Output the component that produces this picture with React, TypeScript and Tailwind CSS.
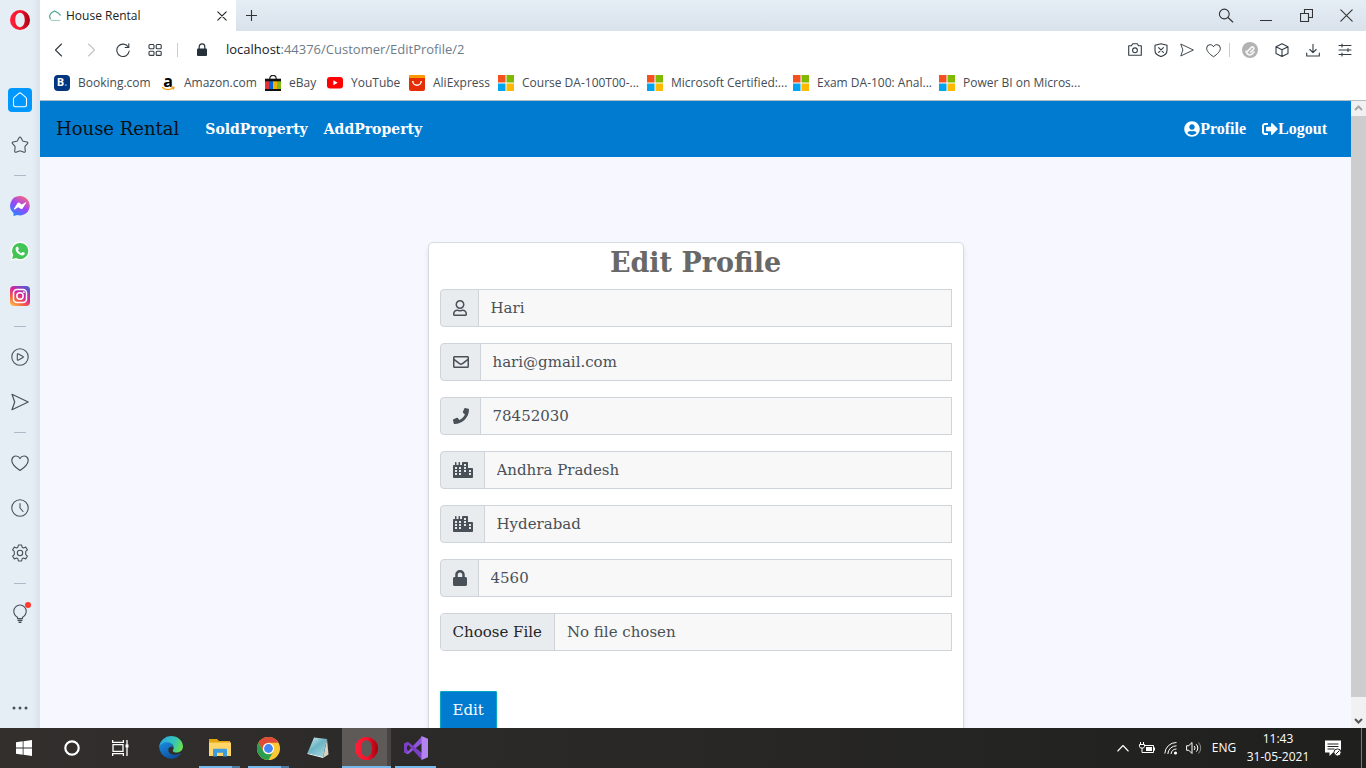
import React from "react";
import {
  FaUserCircle,
  FaSignOutAlt,
  FaRegUser,
  FaRegEnvelope,
  FaPhone,
  FaCity,
  FaLock,
} from "react-icons/fa";

type Kids = { children: React.ReactNode };
type LineProps = Kids & { size?: number; className?: string };

const Line = ({ children, size = 18, className = "" }: LineProps) => (
  <svg
    width={size}
    height={size}
    viewBox={`0 0 ${size} ${size}`}
    fill="none"
    stroke="currentColor"
    strokeWidth="1.1"
    strokeLinejoin="round"
    strokeLinecap="round"
    className={className}
    aria-hidden="true"
  >
    {children}
  </svg>
);

const OperaMark = ({ size, id }: { size: number; id: string }) => (
  <svg width={size} height={size} viewBox="0 0 24 24" aria-hidden="true">
    <defs>
      <linearGradient id={id} x1="0" x2="1">
        <stop offset="0" stopColor="#ff2038" />
        <stop offset="0.55" stopColor="#f0142c" />
        <stop offset="1" stopColor="#a3000e" />
      </linearGradient>
    </defs>
    <path
      fillRule="evenodd"
      fill={`url(#${id})`}
      d="M12 0a12 12 0 1 0 0 24a12 12 0 1 0 0-24zM12 3.400c3.400 0 5.700 3.700 5.700 8.600s-2.300 8.600-5.700 8.600s-5.700-3.700-5.700-8.600s2.300-8.600 5.700-8.600z"
    />
  </svg>
);

const MicrosoftMark = () => (
  <svg width="16" height="16" viewBox="0 0 16 16" aria-hidden="true">
    <path fill="#f4511e" d="M0 0h7.500v7.500H0z" />
    <path fill="#7fba00" d="M8.500 0H16v7.500H8.500z" />
    <path fill="#00a4ef" d="M0 8.500h7.500V16H0z" />
    <path fill="#ffb900" d="M8.500 8.500H16V16H8.500z" />
  </svg>
);

const Messenger = () => (
  <svg width="20" height="20" viewBox="0 0 20 20" aria-hidden="true">
    <defs>
      <linearGradient id="msg" x1="0.2" y1="1" x2="0.8" y2="0">
        <stop offset="0" stopColor="#1f8bff" />
        <stop offset="0.5" stopColor="#9a45fa" />
        <stop offset="1" stopColor="#ff6970" />
      </linearGradient>
    </defs>
    <path fill="url(#msg)" d="M10 0a10 9.700 0 1 1-2.700 19.100L3.500 20v-3A9.700 9.700 0 0 1 10 0z" />
    <path fill="#fff" d="M3.900 12.700L7.400 7.200c.5-.7 1.300-.8 2-.4l2.300 1.700 3.700-2.100c.6-.3 1 .2.700.7l-3.500 5.400c-.5.700-1.300.8-2 .3L8.300 11.200l-3.700 2.200c-.5.300-1-.2-.7-.7z" />
  </svg>
);

const Instagram = () => (
  <svg width="20" height="20" viewBox="0 0 20 20" aria-hidden="true">
    <defs>
      <linearGradient id="ig" x1="0.1" y1="1" x2="0.8" y2="0">
        <stop offset="0" stopColor="#fdc04c" />
        <stop offset="0.3" stopColor="#f56040" />
        <stop offset="0.6" stopColor="#d6249f" />
        <stop offset="1" stopColor="#4f5bd5" />
      </linearGradient>
    </defs>
    <rect width="20" height="20" rx="4" fill="url(#ig)" />
    <g fill="none" stroke="#fff" strokeWidth="1.5">
      <rect x="3.500" y="3.500" width="13" height="13" rx="3.500" />
      <circle cx="10" cy="10" r="3.200" />
    </g>
    <circle cx="13.900" cy="6.200" r="0.900" fill="#fff" />
  </svg>
);

const WhatsApp = () => (
  <svg width="20" height="20" viewBox="0 0 20 20" aria-hidden="true">
    <path fill="#fff" d="M10 .5a9.500 9.500 0 1 1-4.300 18L.5 19.700l1.300-5A9.500 9.500 0 0 1 10 .5z" />
    <path fill="#42c554" d="M10.100 1.900a8.100 8.100 0 1 1-4 15.100l-4 1 1.100-3.900A8.100 8.100 0 0 1 10.100 1.900z" />
    <path fill="#fff" d="M7.300 5.700c.4-.1.700 0 .8.400l.7 1.600c.1.300 0 .5-.2.800l-.6.700c.8 1.500 1.900 2.400 3.300 3l.8-1c.2-.3.500-.3.800-.2l1.600.8c.3.200.4.400.3.800-.2 1.200-1.300 1.900-2.600 1.800-3.700-.5-6.700-3.600-6.600-6.300 0-1.200.7-2.200 1.700-2.400z" />
  </svg>
);

const Heart = ({ size = 18 }: { size?: number }) => (
  <svg width={size} height={size} viewBox="0 0 18 18" fill="none" stroke="currentColor" strokeWidth="1.2" strokeLinejoin="round" aria-hidden="true">
    <path d="M9 16.500C4.500 13.500.8 10 .8 6.200A4.200 4.200 0 0 1 5 2c1.800 0 3.200 1 4 2.500C9.800 3 11.200 2 13 2a4.200 4.200 0 0 1 4.200 4.200c0 3.800-3.700 7.300-8.200 10.300z" />
  </svg>
);

const Send = ({ size = 18 }: { size?: number }) => (
  <svg width={size} height={size} viewBox="0 0 18 18" fill="none" stroke="currentColor" strokeWidth="1.2" strokeLinejoin="round" aria-hidden="true">
    <path d="M1 1.300L17.200 9 1 16.700 3.700 9z" />
  </svg>
);

const Cell = ({ label, children, className = "" }: Kids & { label: string; className?: string }) => (
  <button type="button" aria-label={label} className={`flex shrink-0 items-center justify-center ${className}`}>
    {children}
  </button>
);

const SideSep = () => (
  <div className="flex h-4 shrink-0 items-center justify-center">
    <span className="h-px w-3 bg-[#abb9c8]" />
  </div>
);

const Sidebar = () => (
  <nav
    aria-label="Browser sidebar"
    className="flex w-10 shrink-0 flex-col overflow-hidden bg-gradient-to-r from-[#e5edf5] from-80% to-[#dae4ec] text-[#48525c]"
  >
    <Cell label="Opera menu" className="mb-[37px] h-10">
      <OperaMark size={20} id="opera-side" />
    </Cell>
    <Cell label="Home" className="h-[45px]">
      <span className="flex size-6 items-center justify-center rounded-sm bg-[#0098ff] text-white">
        <Line size={16}>
          <path d="M1.500 6.800c0-.6.200-1 .7-1.400L7.200 1.200c.5-.4 1.100-.4 1.600 0l5 4.200c.5.400.7.800.7 1.400v6.200c0 1-.7 1.700-1.700 1.700H3.200c-1 0-1.700-.7-1.700-1.700z" />
        </Line>
      </span>
    </Cell>
    <Cell label="Bookmarks" className="h-[45px]">
      <Line>
        <path d="M8.200 1.600c.4-.7 1.200-.7 1.600 0l1.700 3c.2.300.5.500.8.600l3.700.8c.8.200 1.100 1 .5 1.600l-2.300 2.600c-.2.200-.3.600-.3 1l.4 4c0 .8-.6 1.300-1.300 1l-3.400-1.300c-.4-.2-.8-.2-1.200 0L5 16.200c-.7.300-1.400-.2-1.300-1l.4-4c0-.4-.1-.8-.3-1L1.500 7.600C.9 7 1.200 6.200 2 6l3.700-.8c.3-.1.600-.3.800-.6z" />
      </Line>
    </Cell>
    <SideSep />
    <Cell label="Messenger" className="h-[45px]"><Messenger /></Cell>
    <Cell label="WhatsApp" className="h-[45px]"><WhatsApp /></Cell>
    <Cell label="Instagram" className="h-[45px]"><Instagram /></Cell>
    <SideSep />
    <Cell label="Player" className="h-[45px]">
      <Line>
        <circle cx="9" cy="9" r="8.200" />
        <path d="M6.300 6.300v5.400c0 .4.300.6.700.5l5-2.600c.5-.3.500-.8 0-1.100L7 5.800c-.4-.1-.7.100-.7.500z" />
      </Line>
    </Cell>
    <Cell label="My Flow" className="h-[45px]"><Send /></Cell>
    <SideSep />
    <Cell label="Pinboards" className="h-[45px]"><Heart /></Cell>
    <Cell label="History" className="h-[45px]">
      <Line>
        <circle cx="9" cy="9" r="8.200" />
        <path d="M9 4.500V9l3 3.500" />
      </Line>
    </Cell>
    <Cell label="Settings" className="h-[45px]">
      <Line>
        <path d="M7.400 1h3.200l.5 2.200 1.400.8 2.200-.9 1.700 2.700-1.700 1.600v3.200l1.700 1.600-1.700 2.700-2.200-.9-1.400.8-.5 2.200H7.400l-.5-2.200-1.400-.8-2.200.9-1.700-2.700 1.700-1.600V7.400L1.600 5.800l1.700-2.700 2.200.9 1.400-.8z" />
        <circle cx="9" cy="9" r="2.700" />
      </Line>
    </Cell>
    <SideSep />
    <Cell label="Tips" className="h-[45px]">
      <span className="relative">
        <svg width="14" height="20" viewBox="0 0 14 20" fill="none" stroke="currentColor" strokeWidth="1.100" aria-hidden="true">
          <path d="M4.500 14.500v-1.300C2.500 12 .8 10 .8 7.200a6.200 6.200 0 0 1 12.400 0c0 2.800-1.700 4.800-3.700 6v1.300z" />
          <path d="M4.500 16.300h5M5.500 18.300h3" strokeWidth="1.600" />
        </svg>
        <span className="absolute -right-1 -top-0.5 size-1.5 rounded-full bg-[#ff3b30]" />
      </span>
    </Cell>
    <Cell label="Sidebar setup" className="mt-auto h-10">
      <svg width="16" height="4" viewBox="0 0 16 4" fill="currentColor" aria-hidden="true">
        <circle cx="2" cy="2" r="1.500" />
        <circle cx="8" cy="2" r="1.500" />
        <circle cx="14" cy="2" r="1.500" />
      </svg>
    </Cell>
  </nav>
);

const TitleBar = () => (
  <div className="flex h-[31px] shrink-0 bg-gradient-to-b from-[#e5edf5] to-[#d9e2eb] text-[#333]">
    <div className="flex w-[196px] items-center bg-white pl-2 text-xs text-[#222]">
      <svg width="14" height="12" viewBox="0 0 14 12" fill="none" aria-hidden="true">
        <path d="M2.500 9.500L1.500 6l1.700-3L6.500 1l4 2.200 2 2.300" stroke="#55a896" strokeWidth="1.200" />
        <path d="M3 10.500h9" stroke="#a9cfc8" strokeWidth="1.200" />
      </svg>
      <span className="ml-1 grow">House Rental</span>
      <Cell label="Close tab" className="h-full w-7">
        <Line size={10}><path d="M.8.8l8.400 8.400M9.200.8L.8 9.200" /></Line>
      </Cell>
    </div>
    <Cell label="New tab" className="w-[30px]">
      <Line size={11}><path d="M5.500 0v11M0 5.500h11" /></Line>
    </Cell>
    <div className="ml-auto flex">
      <Cell label="Search tabs" className="w-10">
        <Line size={16}><circle cx="6.300" cy="6" r="4.900" /><path d="M10 9.500l4.800 4.500" /></Line>
      </Cell>
      <Cell label="Minimise" className="w-10">
        <Line size={12}><path d="M0 10.500h12" /></Line>
      </Cell>
      <Cell label="Restore" className="w-10">
        <Line size={13}><path d="M.5 4.500h8v8h-8zM4.500 4.300V.5h8v8H8.700" strokeLinejoin="miter" /></Line>
      </Cell>
      <Cell label="Close window" className="w-10">
        <Line size={13}><path d="M.8.8l11.400 11.400M12.200.8L.8 12.200" /></Line>
      </Cell>
    </div>
  </div>
);

const AddressBar = () => (
  <div className="flex h-[38px] shrink-0 items-center bg-white pl-[3px] pr-[5px] text-[#333c44]">
    <Cell label="Back" className="h-8 w-8">
      <Line size={14}><path d="M9.500 1L3.500 7l6 6" /></Line>
    </Cell>
    <Cell label="Forward" className="h-8 w-8 text-[#c0c4c8]">
      <Line size={14}><path d="M4.500 1l6 6-6 6" /></Line>
    </Cell>
    <Cell label="Reload" className="h-8 w-8">
      <Line size={14}><path d="M12.300 4A6.200 6.200 0 1 0 13.200 8" /><path d="M12.800.8v3.700H9.200" /></Line>
    </Cell>
    <Cell label="Speed dials" className="h-8 w-8">
      <Line size={14}>
        <rect x="1" y="1.500" width="5" height="4.200" rx="1" />
        <rect x="8.200" y="1.500" width="5" height="4.200" rx="1" />
        <rect x="1" y="8.200" width="5" height="4.200" rx="1" />
        <rect x="8.200" y="8.200" width="5" height="4.200" rx="1" />
      </Line>
    </Cell>
    <span className="ml-1.5 h-3.5 w-px bg-[#c9cdd1]" />
    <Cell label="Site information" className="h-8 w-12">
      <svg width="12" height="14" viewBox="0 0 12 14" aria-hidden="true">
        <rect x="1" y="5.500" width="10" height="7.500" rx="1" fill="#27313a" />
        <path d="M3.200 6V3.700a2.800 2.800 0 0 1 5.600 0V6" fill="none" stroke="#27313a" strokeWidth="1.200" />
      </svg>
    </Cell>
    <a href="#address" className="grow text-[13px] text-[#6e7c89]">
      <span className="text-[#15191d]">localhost</span>:44376/Customer/EditProfile/2
    </a>
    <Cell label="Snapshot" className="h-8 w-[26px]">
      <Line size={16}>
        <path d="M1.700 3.800h2.800l1.200-2h4.600l1.200 2h2.800v9.500H1.700z" />
        <circle cx="8" cy="8.300" r="2.400" />
      </Line>
    </Cell>
    <Cell label="Ad blocker" className="h-8 w-[26px]">
      <Line size={14}>
        <path d="M7 .7l6 1.600v5.300c0 3-3 5.200-6 6-3-.8-6-3-6-6V2.300z" />
        <path d="M4.600 4.600l4.800 4.800M9.400 4.600L4.600 9.400" />
      </Line>
    </Cell>
    <Cell label="Send to My Flow" className="h-8 w-[26px]"><Send size={14} /></Cell>
    <Cell label="Add to bookmarks" className="h-8 w-[26px]"><Heart size={15} /></Cell>
    <span className="ml-[3px] mr-1 h-3.5 w-px bg-[#c9cdd1]" />
    <Cell label="Extension" className="h-8 w-8">
      <svg width="16" height="16" viewBox="0 0 16 16" aria-hidden="true">
        <circle cx="8" cy="8" r="8" fill="#b2b2b2" />
        <path d="M5 9.800l4.500-4.600a1.500 1.500 0 0 1 2.100 2.100L8.200 10.700M4 8.500a4 4 0 0 0 5.500 4l3-3" fill="none" stroke="#f6f6f6" strokeWidth="1.700" />
      </svg>
    </Cell>
    <Cell label="Extensions" className="h-8 w-[31px]">
      <Line size={14}><path d="M7 .7l6 3v6.800l-6 3-6-3V3.700zM1 3.700l6 3 6-3M7 6.700v6.800" /></Line>
    </Cell>
    <Cell label="Downloads" className="h-8 w-8">
      <Line size={14}><path d="M7 1.200v8.300M3.800 6.500L7 9.700l3.200-3.200M.7 10v3h12.600v-3" /></Line>
    </Cell>
    <Cell label="Easy setup" className="h-8 w-8">
      <Line size={14}><path d="M1 2.500h12M1 7h12M1 11.500h12M4 1v3M10 5.500v3M4 10v3" /></Line>
    </Cell>
  </div>
);

const bookmarks: { label: string; icon: React.ReactNode }[] = [
  {
    label: "Booking.com",
    icon: (
      <span className="flex size-4 items-center justify-center rounded-sm bg-[#003580] text-[11px] font-bold text-white">
        B<span className="text-[#3fb2f5]">.</span>
      </span>
    ),
  },
  {
    label: "Amazon.com",
    icon: (
      <span className="relative flex size-4 items-center justify-center pb-1 text-base font-bold leading-none text-black">
        a
        <svg width="14" height="5" viewBox="0 0 14 5" className="absolute bottom-0 left-px" aria-hidden="true">
          <path d="M1 1.200c3.500 2.800 8 2.800 11.300.8M10 .9l3 .4-.6 2.300" fill="none" stroke="#f7a11a" strokeWidth="1.300" />
        </svg>
      </span>
    ),
  },
  {
    label: "eBay",
    icon: (
      <svg width="16" height="16" viewBox="0 0 16 16" aria-hidden="true">
        <path d="M4.800 5V3.500a3.200 3.200 0 0 1 6.400 0V5" fill="none" stroke="#222" strokeWidth="1.200" />
        <path d="M0 3.700h16V16H0z" fill="#111" />
        <path d="M0 6.300h4V14H0z" fill="#e53238" />
        <path d="M4 6.300h4V14H4z" fill="#0064d2" />
        <path d="M8 6.300h4V14H8z" fill="#f5af02" />
        <path d="M12 6.300h4V14h-4z" fill="#86b817" />
      </svg>
    ),
  },
  {
    label: "YouTube",
    icon: (
      <svg width="16" height="12" viewBox="0 0 16 12" aria-hidden="true">
        <rect width="16" height="11.500" rx="3" fill="#f00" />
        <path d="M6.400 3.200l4.300 2.500-4.300 2.500z" fill="#fff" />
      </svg>
    ),
  },
  {
    label: "AliExpress",
    icon: (
      <svg width="16" height="16" viewBox="0 0 16 16" aria-hidden="true">
        <rect width="16" height="16" rx="2" fill="#e62e04" />
        <path d="M2 0h12a2 2 0 0 1 2 2v1H0V2a2 2 0 0 1 2-2z" fill="#ff9900" />
        <path d="M3.800 6a4.200 4.200 0 0 0 8.400 0" fill="none" stroke="#fff" strokeWidth="1.400" />
      </svg>
    ),
  },
  { label: "Course DA-100T00-...", icon: <MicrosoftMark /> },
  { label: "Microsoft Certified:...", icon: <MicrosoftMark /> },
  { label: "Exam DA-100: Anal...", icon: <MicrosoftMark /> },
  { label: "Power BI on Micros...", icon: <MicrosoftMark /> },
];

const BookmarkBar = () => (
  <div className="grid h-8 shrink-0 grid-cols-[106px_105px_62px_82px_89px_149px_146px_146px_auto] border-b border-[#b4bcc4] bg-white pb-1 pl-3.5 text-xs text-[#444c54]">
    {bookmarks.map((b) => (
      <a key={b.label} href="#bookmark" className="flex items-center gap-2 whitespace-nowrap">
        {b.icon}
        <span>{b.label}</span>
      </a>
    ))}
  </div>
);

const fields = [
  { id: "name", label: "Name", type: "text", value: "Hari", Icon: FaRegUser, box: "w-3.5" },
  { id: "email", label: "Email", type: "email", value: "hari@gmail.com", Icon: FaRegEnvelope, box: "w-4" },
  { id: "phone", label: "Phone", type: "tel", value: "78452030", Icon: FaPhone, box: "w-4" },
  { id: "state", label: "State", type: "text", value: "Andhra Pradesh", Icon: FaCity, box: "w-5" },
  { id: "city", label: "City", type: "text", value: "Hyderabad", Icon: FaCity, box: "w-5" },
  { id: "pin", label: "Password", type: "text", value: "4560", Icon: FaLock, box: "w-3.5" },
];

const PageContent = () => (
  <div className="flex min-h-0 grow">
    <main className="grow overflow-hidden bg-[#f7f7ff] font-['DejaVu_Serif',serif]">
      <header className="flex h-14 items-center bg-[#007bd0] px-4">
        <a href="#home" className="text-lg text-[#0a1016]">House Rental</a>
        <nav aria-label="Main" className="flex grow items-center gap-4 pl-[26px] text-sm font-bold text-white">
          <a href="#sold">SoldProperty</a>
          <a href="#add">AddProperty</a>
        </nav>
        <nav aria-label="Account" className="flex items-center gap-4 pr-2 font-['Liberation_Serif',serif] text-base font-bold text-white">
          <a href="#profile" className="flex items-center"><FaUserCircle className="size-4" />Profile</a>
          <a href="#logout" className="flex items-center"><FaSignOutAlt className="size-4" />Logout</a>
        </nav>
      </header>
      <form
        onSubmit={(e) => e.preventDefault()}
        className="mx-auto mt-[85px] w-full max-w-[536px] rounded-[5px] border border-[#d8dae0] bg-white px-[11px] pb-6 shadow-md"
      >
        <h1 className="mb-1.5 text-center text-[27px] font-bold leading-10 text-[#686868]">Edit Profile</h1>
        <div className="flex flex-col gap-4">
          {fields.map(({ id, label, type, value, Icon, box }) => (
            <div key={id} className="flex h-[38px]">
              <label
                htmlFor={id}
                aria-label={label}
                className="flex items-center rounded-l border border-[#ced4da] bg-[#e9ecef] px-3 text-[#495057]"
              >
                <Icon className={`-mr-px h-4 ${box}`} />
              </label>
              <input
                id={id}
                type={type}
                defaultValue={value}
                className="-ml-px min-w-0 grow border border-[#ced4da] bg-[#f8f8f8] px-3 text-[15px] text-[#495057]"
              />
            </div>
          ))}
          <input
            type="file"
            aria-label="Profile picture"
            className="h-[38px] w-full rounded-l border border-[#ced4da] bg-[#f8f8f8] text-[15px] leading-9 text-[#495057] file:mr-3 file:h-9 file:border-r file:border-[#ced4da] file:bg-[#e9ecef] file:px-3 file:text-[#212529]"
          />
        </div>
        <button
          type="submit"
          className="mt-10 h-[38px] rounded-[1px] border border-[#0aa5c0] bg-[#007bd0] px-3 text-[15px] font-medium text-white shadow"
        >
          Edit
        </button>
      </form>
    </main>
    <div className="flex w-[15px] shrink-0 flex-col bg-[#f1f1f1]" aria-hidden="true">
      <svg width="15" height="15" viewBox="0 0 15 15"><path d="M4 9l3.500-3.500L11 9" fill="none" stroke="#a8a8a8" strokeWidth="2" /></svg>
      <div className="grow bg-[#cdcdcd]" />
      <svg width="15" height="31" viewBox="0 0 15 31"><path d="M4 22l3.500 3.500L11 22" fill="none" stroke="#555" strokeWidth="2" /></svg>
    </div>
  </div>
);

const Edge = () => (
  <svg width="24" height="24" viewBox="0 0 24 24" aria-hidden="true">
    <defs>
      <linearGradient id="edge-top" x1="0" y1="0.3" x2="1" y2="0.6">
        <stop offset="0" stopColor="#2aa8e8" />
        <stop offset="0.6" stopColor="#35c6b4" />
        <stop offset="1" stopColor="#6be04b" />
      </linearGradient>
      <linearGradient id="edge-low" x1="0" y1="0" x2="0.7" y2="1">
        <stop offset="0" stopColor="#1b8fe0" />
        <stop offset="1" stopColor="#0c4c9c" />
      </linearGradient>
    </defs>
    <path fill="url(#edge-low)" d="M.2 10.500C1.500 6.500 6 5 9.500 6c3 .8 4.500 3 4.500 5.500-1.500-1.800-4.500-.5-4.700 2.300-.2 3.500 4.500 6.200 9 4.600 1.500-.5 2.700-1.300 3.200-1.200.4.100.4.500.2.900A12 12 0 0 1 .2 10.500z" />
    <path fill="url(#edge-top)" d="M.2 11A12 12 0 0 1 12 0c7 0 12 5 12 10.500 0 3.800-3 6-6.300 6-2.500 0-4-1-4-1.800 0-.6.900-1 .9-2.900 0-3.200-3-5.500-6.700-5.500C4.500 6.300 1.300 8 .2 11z" />
  </svg>
);

const Explorer = () => (
  <svg width="24" height="20" viewBox="0 0 24 20" aria-hidden="true">
    <path fill="#e5a50f" d="M1 1h8l2 2h11v5H1z" />
    <path fill="#ffd667" d="M1 4.500h22V18H1z" />
    <path fill="#3d9be0" d="M5 18.500v-6.500c0-.8.500-1.300 1.300-1.300h11.400c.8 0 1.300.5 1.300 1.300v6.500h-4v-3.700H9v3.700z" />
  </svg>
);

const Chrome = () => (
  <svg width="23" height="23" viewBox="0 0 24 24" aria-hidden="true">
    <circle cx="12" cy="12" r="12" fill="#fcc934" />
    <path fill="#e04a3b" d="M1.600 6A12 12 0 0 1 22.400 6H12a6 6 0 0 0-5.200 9z" />
    <path fill="#2a9d50" d="M1.600 6A12 12 0 0 0 12 24l5.200-9A6 6 0 0 1 6.800 15z" />
    <circle cx="12" cy="12" r="5.800" fill="#fff" />
    <circle cx="12" cy="12" r="4.600" fill="#4285f4" />
  </svg>
);

const Notepad = () => (
  <svg width="24" height="24" viewBox="0 0 24 24" aria-hidden="true">
    <defs>
      <linearGradient id="pad" x1="0" y1="0" x2="0.7" y2="1">
        <stop offset="0" stopColor="#d8f0f4" />
        <stop offset="0.5" stopColor="#6cb4c4" />
        <stop offset="1" stopColor="#9fd5df" />
      </linearGradient>
    </defs>
    <path fill="#d8d2c0" d="M21 3l1.500 15.500L17 22z" />
    <path fill="url(#pad)" d="M8 1.500L21 3l-4 18.500L1.500 17z" />
    <path stroke="#eef8fa" fill="none" d="M1.500 17.500l15.500 4" />
  </svg>
);

const VisualStudio = () => (
  <svg width="24" height="24" viewBox="0 0 24 24" aria-hidden="true">
    <path fill="#7b3fc4" d="M0 7.500L2 6.500 4 7.300v9.400L2 17.500l-2-1z" />
    <path fill="#8f55dc" d="M2 17.500L18 .2V7L4 18.200z" />
    <path fill="#7b3fc4" d="M2 6.500L4 5.800 18 17v7z" />
    <path fill="#2a2827" d="M3 9.500v5L5.500 12z" />
    <path fill="#b184f0" d="M17.500 0L24 2.700v18.600L17.500 24z" />
  </svg>
);

const Running = ({ stacked = false }: { stacked?: boolean }) => (
  <span className="absolute inset-x-1 bottom-0 flex h-0.5">
    <span className="grow bg-[#76b9ed]" />
    {stacked && <span className="w-2 bg-[#4d7ba0]" />}
  </span>
);

const Taskbar = () => (
  <footer className="flex h-10 shrink-0 bg-gradient-to-r from-[#322f2d] to-[#1f201e] text-xs text-white">
    <Cell label="Start" className="w-12">
      <svg width="16" height="16" viewBox="0 0 16 16" fill="#fff" aria-hidden="true">
        <path d="M0 2.200l6.700-.9v6.300H0zM7.500 1.200L16 0v7.600H7.500zM0 8.400h6.700v6.300L0 13.800zM7.500 8.400H16V16l-8.500-1.200z" />
      </svg>
    </Cell>
    <Cell label="Cortana" className="w-12">
      <svg width="16" height="16" viewBox="0 0 16 16" fill="none" aria-hidden="true">
        <circle cx="8" cy="8" r="6.700" stroke="#fff" strokeWidth="2.200" />
      </svg>
    </Cell>
    <Cell label="Task view" className="mr-0.5 w-12">
      <svg width="17" height="16" viewBox="0 0 17 16" fill="none" stroke="#fff" strokeWidth="1.300" aria-hidden="true">
        <path d="M1 4.700h10v6.600H1zM.6 0v2.300h10.800V0M.6 16v-2.300h10.800V16M15 0v16" />
        <path d="M13.500 4.500h3v3h-3z" fill="#fff" stroke="none" />
      </svg>
    </Cell>
    <Cell label="Microsoft Edge" className="w-[49px]"><Edge /></Cell>
    <Cell label="File Explorer" className="relative w-[49px]"><Explorer /><Running stacked /></Cell>
    <Cell label="Google Chrome" className="relative w-[49px]"><Chrome /><Running stacked /></Cell>
    <Cell label="Notepad" className="w-[49px]"><Notepad /></Cell>
    <Cell label="Opera" className="relative w-[49px] bg-[#5d5a58]">
      <OperaMark size={23} id="opera-task" />
      <span className="absolute inset-y-0 right-0 w-1 bg-[#474543]" />
      <span className="absolute inset-x-0 bottom-0 h-0.5 bg-[#76b9ed]" />
    </Cell>
    <Cell label="Visual Studio" className="relative w-[49px]"><VisualStudio /><Running /></Cell>
    <div className="ml-auto flex">
      <Cell label="Hidden icons" className="w-6">
        <Line size={12}><path d="M.8 9L6 3.500 11.200 9" /></Line>
      </Cell>
      <Cell label="Battery" className="w-6">
        <svg width="16" height="13" viewBox="0 0 16 13" fill="none" stroke="#fff" aria-hidden="true">
          <path d="M5.500 3.500h9v7h-9M15.500 5.500v3" />
          <path d="M7 5h6v4H7z" fill="#fff" stroke="none" />
          <path d="M1.500 0v2.500M4.500 0v2.500M.5 2.500h5v2l-1 1.500h-3l-1-1.500zM3 6v4.500h3" />
        </svg>
      </Cell>
      <Cell label="Network" className="w-6">
        <svg width="14" height="14" viewBox="0 0 14 14" fill="none" stroke="#fff" aria-hidden="true">
          <path d="M.8 12.500A11.500 11.500 0 0 1 12.500 1.500M3.800 13A8.700 8.700 0 0 1 12.500 4.800M7 13a5.700 5.700 0 0 1 5.500-5" />
          <circle cx="11.500" cy="12" r="1.600" fill="#fff" stroke="none" />
        </svg>
      </Cell>
      <Cell label="Volume" className="w-[22px]">
        <svg width="16" height="14" viewBox="0 0 16 14" fill="none" stroke="#fff" aria-hidden="true">
          <path d="M.6 4.700h2.200L6 1.500v11L2.800 9.300H.6zM8.200 5a3 3 0 0 1 0 4M10.300 3.300a5.300 5.300 0 0 1 0 7.400" />
          <path d="M12.500 1.500a8 8 0 0 1 0 11" stroke="#888" />
        </svg>
      </Cell>
      <button type="button" className="w-[38px] whitespace-nowrap">ENG</button>
      <button type="button" className="w-[70px] whitespace-nowrap leading-[18px]">
        11:43
        <br />
        31-05-2021
      </button>
      <Cell label="Notifications" className="mr-2 w-10">
        <svg width="17" height="17" viewBox="0 0 17 17" aria-hidden="true">
          <path fill="#fff" d="M0 .5h16v12H8l-3.500 3.500v-3.500H0z" />
          <path stroke="#222" d="M2.500 4h11M2.500 6.500h11M2.500 9h7" />
          <circle cx="12.500" cy="12.500" r="3.600" fill="#fff" stroke="#222" />
          <path stroke="#222" d="M10.500 14.500l4-4" />
        </svg>
      </Cell>
      <span className="mr-1 w-px bg-[#777]" />
    </div>
  </footer>
);

export default function App() {
  return (
    <div className="flex h-screen flex-col overflow-hidden font-['Open_Sans',sans-serif]">
      <div className="flex min-h-0 grow">
        <Sidebar />
        <div className="flex min-w-0 grow flex-col">
          <TitleBar />
          <AddressBar />
          <BookmarkBar />
          <PageContent />
        </div>
      </div>
      <Taskbar />
    </div>
  );
}
